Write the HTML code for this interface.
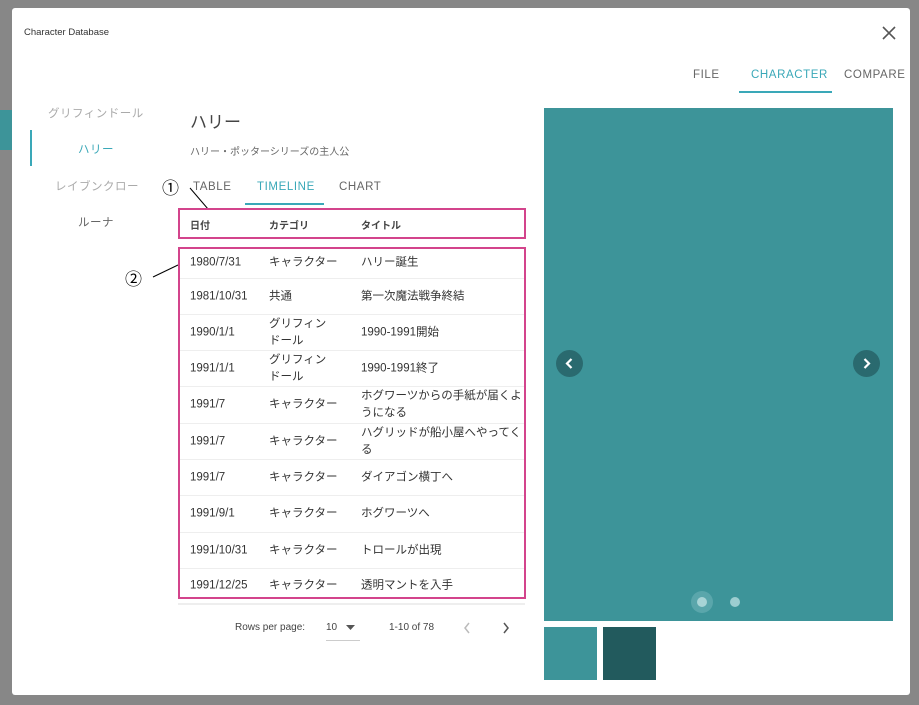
<!DOCTYPE html>
<html><head><meta charset="utf-8"><style>
*{margin:0;padding:0;box-sizing:border-box}
body{width:919px;height:705px;background:#878787;position:relative;overflow:hidden;font-family:"Liberation Sans","Noto Sans CJK JP",sans-serif;color:#333}
.a{position:absolute;white-space:nowrap}
#dlg{position:absolute;left:12px;top:8px;width:898px;height:687px;background:#fff;border-radius:3px}
.row{position:absolute;left:178px;width:347px;border-bottom:1px solid #eee;font-size:11.5px;color:#333}
.row span{position:absolute;top:50%;transform:translateY(-50%);line-height:17px}
.c1{left:12px}.c2{left:91px}.c3{left:183px}
.tab{font-size:11.5px;letter-spacing:0.6px}
</style></head><body>
<div class="a" style="left:0;top:110px;width:12px;height:40px;background:#3d9499"></div>
<div id="dlg"></div>
<div class="a" style="left:24px;top:27px;font-size:9.5px;color:#333">Character Database</div>
<svg class="a" style="left:882px;top:26px" width="14" height="14"><path d="M1 1L13 13M13 1L1 13" stroke="#555" stroke-width="1.6"/></svg>
<div class="a tab" style="left:693px;top:69px;color:#666">FILE</div>
<div class="a tab" style="left:751px;top:69px;color:#3aa8b8">CHARACTER</div>
<div class="a" style="left:739px;top:91px;width:93px;height:2px;background:#3aa8b8"></div>
<div class="a tab" style="left:844px;top:69px;color:#666">COMPARE</div>

<div class="a" style="left:48px;top:105px;font-size:11.5px;color:#aaa;letter-spacing:0.5px">グリフィンドール</div>
<div class="a" style="left:30px;top:130px;width:2px;height:36px;background:#3aa8b8"></div>
<div class="a" style="left:78px;top:141px;font-size:11.5px;color:#3aa8b8;letter-spacing:0.5px">ハリー</div>
<div class="a" style="left:55px;top:178px;font-size:11.5px;color:#aaa;letter-spacing:0.5px">レイブンクロー</div>
<div class="a" style="left:78px;top:214px;font-size:11.5px;color:#666;letter-spacing:0.5px">ルーナ</div>

<div class="a" style="left:190px;top:108px;font-size:17px;color:#444">ハリー</div>
<div class="a" style="left:190px;top:143px;font-size:10px;color:#666">ハリー・ポッターシリーズの主人公</div>

<div class="a" style="left:162px;top:174px;font-size:17px;color:#000">①</div>
<svg class="a" style="left:150px;top:185px" width="70" height="100"><path d="M40 3L58 24M3 92L28 80" stroke="#000" stroke-width="1"/></svg>
<div class="a" style="left:125px;top:265px;font-size:17px;color:#000">②</div>

<div class="a tab" style="left:193px;top:181px;color:#666">TABLE</div>
<div class="a tab" style="left:257px;top:181px;color:#3aa8b8">TIMELINE</div>
<div class="a" style="left:245px;top:203px;width:79px;height:2px;background:#3aa8b8"></div>
<div class="a tab" style="left:339px;top:181px;color:#666">CHART</div>

<div class="a" style="left:178px;top:208px;width:348px;height:31px;border:2px solid #d3448c"></div>
<div class="a" style="left:190px;top:217px;font-size:10px;color:#444;font-weight:bold">日付</div>
<div class="a" style="left:269px;top:217px;font-size:10px;color:#444;font-weight:bold">カテゴリ</div>
<div class="a" style="left:361px;top:217px;font-size:10px;color:#444;font-weight:bold">タイトル</div>

<div class="row" style="top:247px;height:32px"><span class="c1">1980/7/31</span><span class="c2">キャラクター</span><span class="c3">ハリー誕生</span></div>
<div class="row" style="top:279px;height:36px"><span class="c1">1981/10/31</span><span class="c2">共通</span><span class="c3">第一次魔法戦争終結</span></div>
<div class="row" style="top:315px;height:36px"><span class="c1">1990/1/1</span><span class="c2">グリフィン<br>ドール</span><span class="c3">1990-1991開始</span></div>
<div class="row" style="top:351px;height:36px"><span class="c1">1991/1/1</span><span class="c2">グリフィン<br>ドール</span><span class="c3">1990-1991終了</span></div>
<div class="row" style="top:387px;height:37px"><span class="c1">1991/7</span><span class="c2">キャラクター</span><span class="c3">ホグワーツからの手紙が届くよ<br>うになる</span></div>
<div class="row" style="top:424px;height:36px"><span class="c1">1991/7</span><span class="c2">キャラクター</span><span class="c3">ハグリッドが船小屋へやってく<br>る</span></div>
<div class="row" style="top:460px;height:36px"><span class="c1">1991/7</span><span class="c2">キャラクター</span><span class="c3">ダイアゴン横丁へ</span></div>
<div class="row" style="top:496px;height:37px"><span class="c1">1991/9/1</span><span class="c2">キャラクター</span><span class="c3">ホグワーツへ</span></div>
<div class="row" style="top:533px;height:36px"><span class="c1">1991/10/31</span><span class="c2">キャラクター</span><span class="c3">トロールが出現</span></div>
<div class="row" style="top:569px;height:36px;border-bottom:2px solid #eee"><span class="c1">1991/12/25</span><span class="c2">キャラクター</span><span class="c3">透明マントを入手</span></div>
<div class="a" style="left:178px;top:247px;width:348px;height:352px;border:2px solid #d3448c"></div>

<div class="a" style="left:235px;top:622px;font-size:10px;color:#444">Rows per page:</div>
<div class="a" style="left:326px;top:622px;font-size:10px;color:#444">10</div>
<svg class="a" style="left:346px;top:625px" width="9" height="6"><path d="M0 0H9L4.5 5Z" fill="#555"/></svg>
<div class="a" style="left:326px;top:640px;width:34px;height:1px;background:#ccc"></div>
<div class="a" style="left:389px;top:622px;font-size:10px;color:#444">1-10 of 78</div>
<svg class="a" style="left:463px;top:622px" width="8" height="12"><path d="M6 1L2 6L6 11" stroke="#bbb" stroke-width="1.5" fill="none"/></svg>
<svg class="a" style="left:502px;top:622px" width="8" height="12"><path d="M2 1L6 6L2 11" stroke="#555" stroke-width="1.5" fill="none"/></svg>

<div class="a" style="left:544px;top:108px;width:349px;height:513px;background:#3d9499"></div>
<div class="a" style="left:556px;top:350px;width:27px;height:27px;border-radius:50%;background:#2a6a6f"></div>
<svg class="a" style="left:563px;top:357px" width="13" height="13"><path d="M8.5 2L4 6.5L8.5 11" stroke="#fff" stroke-width="2.2" fill="none"/></svg>
<div class="a" style="left:853px;top:350px;width:27px;height:27px;border-radius:50%;background:#2a6a6f"></div>
<svg class="a" style="left:860px;top:357px" width="13" height="13"><path d="M4.5 2L9 6.5L4.5 11" stroke="#fff" stroke-width="2.2" fill="none"/></svg>
<div class="a" style="left:691px;top:591px;width:22px;height:22px;border-radius:50%;background:#5aa6ab"></div>
<div class="a" style="left:697px;top:597px;width:10px;height:10px;border-radius:50%;background:#a8d4d6"></div>
<div class="a" style="left:730px;top:597px;width:10px;height:10px;border-radius:50%;background:#9ccdd0"></div>
<div class="a" style="left:544px;top:627px;width:53px;height:53px;background:#3d9499"></div>
<div class="a" style="left:603px;top:627px;width:53px;height:53px;background:#225a5d"></div>
</body></html>
